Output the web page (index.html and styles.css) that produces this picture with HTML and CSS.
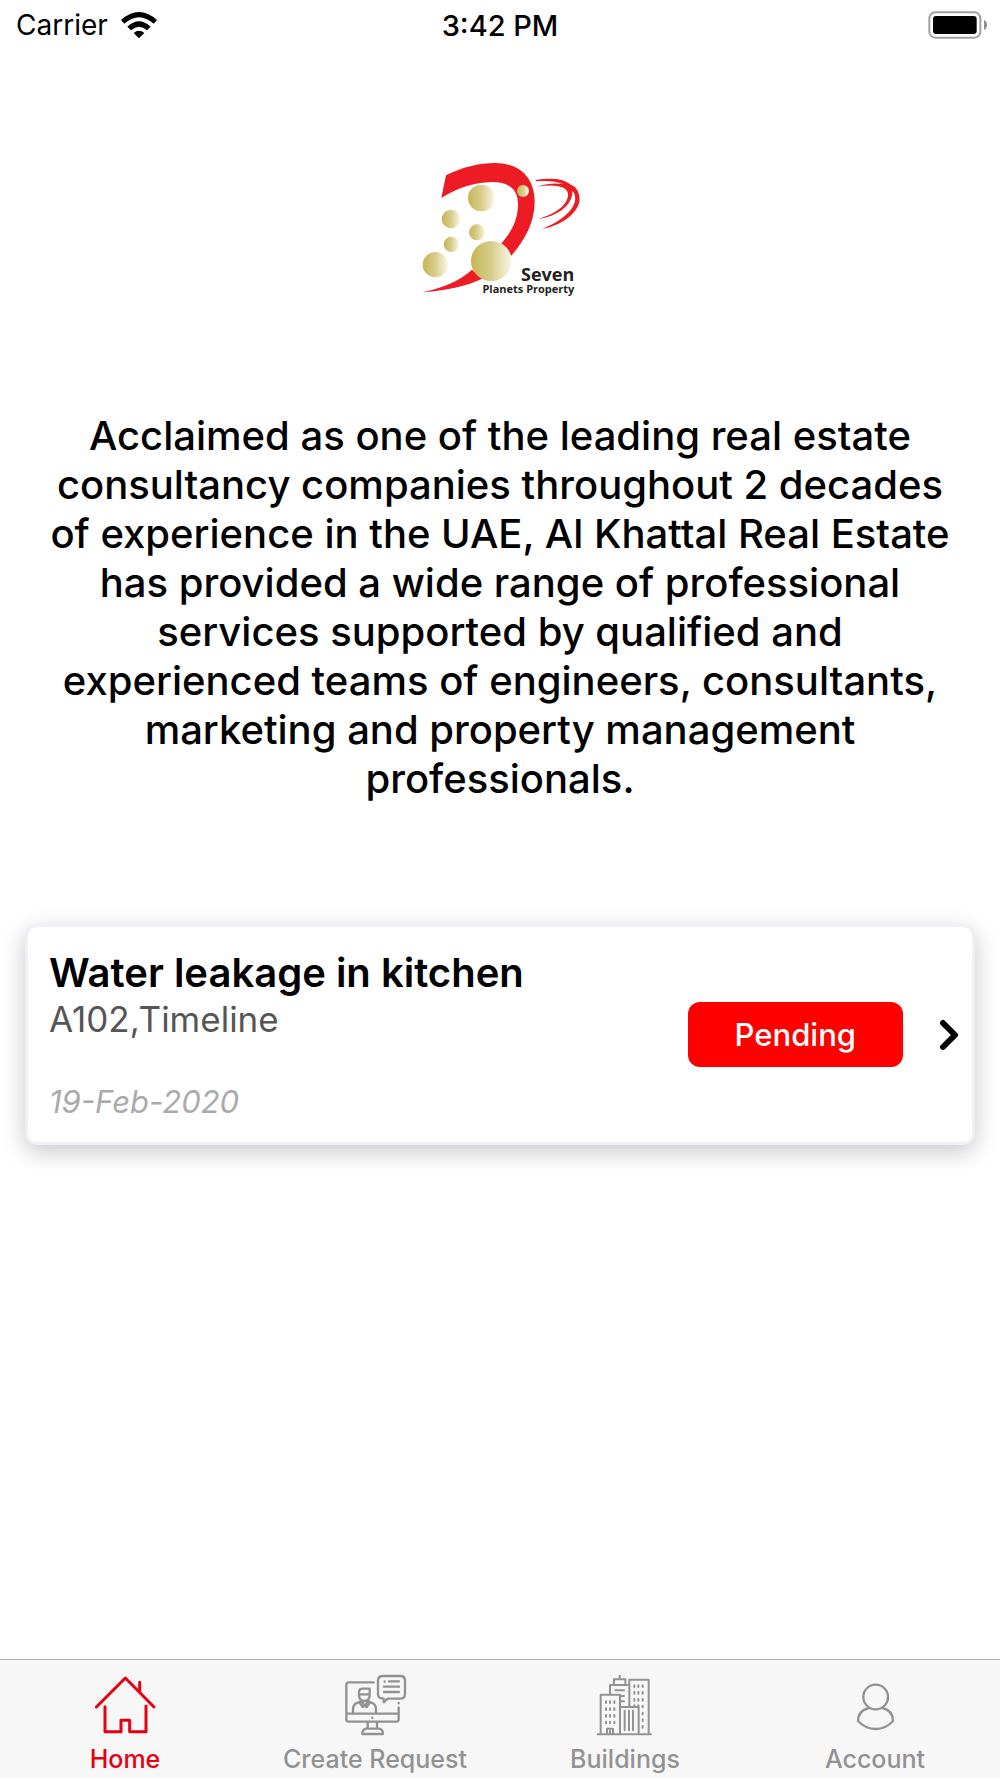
FILE: index.html
```html
<!DOCTYPE html>
<html lang="en">

<head>
    <meta charset="UTF-8">
    <meta name="viewport" content="width=device-width, initial-scale=1.0">
    <title>Seven Planets Property</title>
    <link rel="stylesheet" href="styles.css">
</head>

<body>
    <header class="status">
        <div class="carrier">
            <span>Carrier</span>
            <svg class="wifi" viewBox="0 0 114 84" aria-hidden="true">
                <path d="M3 27Q57 -21 111 27L101 38Q57 -1 13 38Z" />
                <path d="M22 47Q57 14 92 47L81 58Q57 37 33 58Z" />
                <path d="M41 66Q57 53 73 66L57 82Z" />
            </svg>
        </div>
        <span class="time">3:42 PM</span>
        <svg class="battery" viewBox="0 0 180 84" aria-hidden="true">
            <rect x="4" y="4" width="153" height="76" rx="18" fill="none" stroke="#a0a0a0" stroke-width="6" />
            <rect x="15" y="15" width="131" height="54" rx="9" />
            <path d="M168 27Q177 31 177 42Q177 53 168 57Z" fill="#8c8c8c" />
        </svg>
    </header>

    <main>
        <svg class="logo" viewBox="0 0 540 480" role="img" aria-label="Seven Planets Property">
            <defs>
                <linearGradient id="gold">
                    <stop offset="0" stop-color="#c5b553" />
                    <stop offset="0.5" stop-color="#d8cd8c" />
                    <stop offset="1" stop-color="#faf7e6" />
                </linearGradient>
            </defs>
            <g fill="#ed1c24">
                <path d="M108 76C160 50 210 39 255 39C325 39 374 80 374 155C374 215 345 270 304 317L273 282C305 245 323 210 324 165C325 120 300 96 245 96C190 97 140 115 94 144Z" />
                <path d="M37 427C100 412 145 396 186 359L217 386C165 410 110 421 37 427Z" />
                <path d="M377 90C420 83 460 84 482 104C502 110 512 135 508 157C498 195 450 228 396 237C440 220 485 190 494 157C498 140 494 130 487 122C490 165 440 200 384 207C425 195 475 170 474 132C473 108 430 102 382 110C410 100 438 99 458 102C438 93 410 91 377 94Z" />
            </g>
            <g fill="url(#gold)">
                <circle cx="214" cy="144" r="40" />
                <circle cx="339" cy="123" r="18" />
                <circle cx="123" cy="207" r="28" />
                <circle cx="201" cy="247" r="24" />
                <circle cx="124" cy="283" r="23" />
                <circle cx="76" cy="344" r="38" />
                <ellipse cx="244" cy="333" rx="61" ry="60" />
            </g>
            <g class="logo-text" text-anchor="end">
                <text x="493" y="394" font-size="54">Seven</text>
                <text x="493" y="429" font-size="33">Planets Property</text>
            </g>
        </svg>

        <p class="about">Acclaimed as one of the leading real estate consultancy companies throughout 2 decades of experience in the UAE, Al Khattal Real Estate has provided a wide range of professional services supported by qualified and experienced teams of engineers, consultants, marketing and property management professionals.</p>

        <section class="requests">
            <article class="card">
                <div class="details">
                    <h2>Water leakage in kitchen</h2>
                    <p class="unit">A102,Timeline</p>
                    <p class="date">19-Feb-2020</p>
                </div>
                <button type="button" class="pending">Pending</button>
                <a href="#request" class="open" aria-label="Open request">
                    <svg viewBox="0 0 60 96" aria-hidden="true">
                        <path d="M12 12L48 48L12 84" />
                    </svg>
                </a>
            </article>
        </section>
    </main>

    <nav class="tabs">
        <a href="#home" class="tab active">
            <svg viewBox="99 72 192 192" stroke-width="9" aria-hidden="true">
                <path d="M109 171L196 84L282 171M239 97V126M135 170V245H183V211H209V245H258V168" />
            </svg>
            <span>Home</span>
        </a>
        <a href="#create" class="tab">
            <svg viewBox="219 72 192 192" stroke-width="7" aria-hidden="true">
                <path d="M311 97H236Q229 97 229 104V208Q229 215 236 215H379Q386 215 386 208V172M386 159V160M229 191H386M307 203V204" />
                <path d="M338 78H391Q405 78 405 92V132Q405 146 391 146H353L341 157V146Q324 146 324 132V92Q324 78 338 78Z" />
                <path d="M344 94V95M357 94H387M342 110H387M342 126H387" />
                <path d="M293 217V236M321 217V236M288 236H327Q339 238 339 252H277Q277 238 288 236Z" />
                <path d="M249 190V178Q249 160 266 157L274 153L284 168L295 153L302 157Q318 160 318 178V190M267 133V127Q267 116 278 116H299V133M267 133H299V139Q296 153 283 153Q270 153 267 139Z" />
                <path d="M268 157L278 171L283 166L290 171L300 157" />
            </svg>
            <span>Create Request</span>
        </a>
        <a href="#buildings" class="tab">
            <svg viewBox="129 72 192 192" stroke-width="6" aria-hidden="true">
                <path d="M143 253H303M152 252V134H210V252M180 132V105H235M192 104V88H226V104M209 88V77M238 168V89H296V252M211 171H266V252" />
                <path d="M196 121H222M212 138H222M212 154H222M224 182V241M237 182V241M249 182V241" />
                <path d="M171 251V236H189V251M180 243V250" />
                <path d="M168 154V159M180 154V159M193 154V159M168 175V180M180 175V180M193 175V180M168 195V200M180 195V200M193 195V200M168 215V220M180 215V220M193 215V220" />
                <path d="M253 106V111M265 106V111M278 106V111M253 126V131M265 126V131M278 126V131M253 147V152M265 147V152M278 147V152M253 166V168M265 166V168M278 167V172M278 188V193M278 208V213M278 228V233" />
            </svg>
            <span>Buildings</span>
        </a>
        <a href="#account" class="tab">
            <svg viewBox="129 72 192 192" stroke-width="7" aria-hidden="true">
                <circle cx="227" cy="141" r="37" />
                <path d="M206 174Q174 182 174 213Q197 237 227 237Q257 237 279 213Q279 182 248 174" />
            </svg>
            <span>Account</span>
        </a>
    </nav>
</body>

</html>
```

FILE: styles.css
```css
* {
    box-sizing: border-box;
}

body {
    margin: 0;
    min-height: 100vh;
    display: flex;
    flex-direction: column;
    background: white;
    color: black;
    font-family: Inter, "Liberation Sans", sans-serif;
}

h2,
p {
    margin: 0;
}

a {
    color: inherit;
    text-decoration: none;
}

.status {
    display: grid;
    grid-template-columns: 1fr auto 1fr;
    align-items: center;
    height: 50px;
    padding: 0 12px;
    font-size: 28px;
}

.carrier {
    display: flex;
    align-items: center;
    gap: 12px;
    padding-left: 4px;
}

.wifi {
    width: 38px;
    height: 28px;
}

.time {
    font-size: 29px;
    font-weight: 500;
}

.battery {
    width: 60px;
    height: 28px;
    justify-self: end;
}

main {
    flex: 1;
}

.logo {
    display: block;
    width: 180px;
    height: 160px;
    margin: 100px auto 0;
}

.logo-text {
    fill: #231f20;
    font-family: "Open Sans", "Noto Sans", sans-serif;
    font-weight: 700;
}

.about {
    padding: 0 48px;
    margin: 101px 0 97px;
    font-size: 40px;
    font-weight: 500;
    line-height: 49px;
    text-align: center;
}

/* keeps the card shadow inside the list */
.requests {
    overflow: hidden;
    padding: 24px 25px;
}

.card {
    display: flex;
    align-items: center;
    padding: 21px 13px 21px 21px;
    border: 3px solid #f0f0f6;
    border-radius: 12px;
    background: white;
    box-shadow: 0 7px 24px rgba(0, 0, 0, 0.22);
}

.details {
    flex: 1;
}

.card h2 {
    font-size: 40px;
    font-weight: 600;
    line-height: 50px;
}

.unit {
    font-size: 35px;
    line-height: 43px;
    color: #555;
}

.date {
    margin-top: 42px;
    font-size: 31px;
    font-style: italic;
    line-height: 38px;
    color: #aaa;
}

.pending {
    padding: 14px 47px;
    border: none;
    border-radius: 12px;
    background: red;
    color: white;
    font-family: inherit;
    font-size: 31px;
    font-weight: 500;
    line-height: 37px;
}

.open {
    margin-left: 36px;
}

.open svg {
    display: block;
    width: 20px;
    height: 32px;
    fill: none;
    stroke: black;
    stroke-width: 18px;
    stroke-linecap: round;
    stroke-linejoin: round;
}

.tabs {
    display: grid;
    grid-template-columns: repeat(4, 1fr);
    padding: 14px 0 4px;
    border-top: 1px solid #b4b4b4;
    background: #f7f7f7;
}

.tab {
    display: flex;
    flex-direction: column;
    align-items: center;
    gap: 7px;
    color: #929292;
    font-size: 25px;
    font-weight: 500;
    line-height: 29px;
}

.tab svg {
    width: 64px;
    height: 64px;
    fill: none;
    stroke: currentColor;
    stroke-linecap: round;
    stroke-linejoin: round;
}

.active {
    color: #e60012;
}
```
